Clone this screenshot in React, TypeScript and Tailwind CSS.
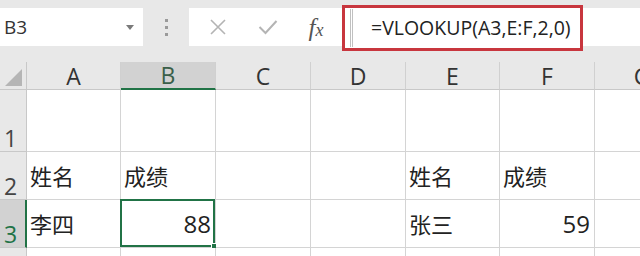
import React from "react";

const FONT = { fontFamily: '"Open Sans","Noto Sans CJK SC",sans-serif' };

type Col = { k: string; w: string };
const cols: Col[] = [
  { k: "A", w: "w-[94px]" },
  { k: "B", w: "w-[95px]" },
  { k: "C", w: "w-[95px]" },
  { k: "D", w: "w-[95px]" },
  { k: "E", w: "w-[94px]" },
  { k: "F", w: "w-[95px]" },
  { k: "G", w: "w-[95px]" },
];

function CJK({ children }: { children: React.ReactNode }) {
  return (
    <span className="text-[22px] text-[#222]" style={{ fontFamily: '"Noto Sans CJK SC",sans-serif' }}>
      {children}
    </span>
  );
}

function Num({ children }: { children: React.ReactNode }) {
  return <span className="text-[24px] text-[#222]">{children}</span>;
}

type CellDef = { text?: React.ReactNode; right?: boolean };

function Row({
  n,
  h,
  cells,
  selected,
}: {
  n: string;
  h: string;
  cells: Record<string, CellDef>;
  selected?: boolean;
}) {
  return (
    <div className={`flex ${h}`}>
      <div
        className={`w-[27px] shrink-0 flex items-end pl-[4px] pb-[1px] border-b border-[#c8c8c8] ${
          selected ? "bg-[#d2d2d2] border-r-2 border-r-[#217346] text-[#217346]" : "bg-[#e8e8e8] border-r border-r-[#c8c8c8] text-[#444]"
        }`}
      >
        <span className="text-[23px] leading-none">{n}</span>
      </div>
      {cols.map((c) => {
        const d = cells[c.k];
        const sel = selected && c.k === "B";
        return (
          <div
            key={c.k}
            className={`${c.w} shrink-0 relative bg-white border-r border-b border-[#d4d4d4] flex items-center ${
              d?.right ? "justify-end pr-[4px]" : "pl-[3px]"
            }`}
          >
            {d?.text}
            {sel && (
              <div className="absolute -left-[1px] -top-[1px] right-0 bottom-0 border-2 border-[#217346]">
                <div className="absolute -right-[4px] -bottom-[4px] w-[6px] h-[6px] bg-[#217346] border border-white" />
              </div>
            )}
          </div>
        );
      })}
    </div>
  );
}

export default function App() {
  return (
    <div className="relative w-[640px] h-[256px] overflow-hidden bg-[#e8e8e8] text-[#222]" style={FONT}>
      {/* Toolbar */}
      <div className="h-[62px] flex items-start pt-[5px]">
        <div className="w-[143px] h-[38px] mt-[3px] bg-white flex items-center justify-between pl-[4px] pr-[9px] shrink-0">
          <span className="text-[19px] text-[#333]">B3</span>
          <svg width="8" height="5" viewBox="0 0 8 5">
            <path d="M0 0 L8 0 L4 5 Z" fill="#7a7a7a" />
          </svg>
        </div>
        <div className="w-[46px] h-[38px] mt-[3px] flex flex-col items-center justify-center gap-[4px] shrink-0">
          <div className="w-[3px] h-[3px] bg-[#9a9a9a]" />
          <div className="w-[3px] h-[3px] bg-[#9a9a9a]" />
          <div className="w-[3px] h-[3px] bg-[#9a9a9a]" />
        </div>
        <div className="flex-1 h-[38px] mt-[3px] bg-white flex items-center">
          <div className="w-[56px] flex justify-center pl-[1px]">
            <svg width="18" height="18" viewBox="0 0 18 18">
              <path d="M2 2 L16 16 M16 2 L2 16" stroke="#b4b4b4" strokeWidth="1.6" fill="none" />
            </svg>
          </div>
          <div className="w-[46px] flex justify-center">
            <svg width="20" height="16" viewBox="0 0 20 16">
              <path d="M1.5 8 L7.5 14 L18.5 2" stroke="#b4b4b4" strokeWidth="2" fill="none" />
            </svg>
          </div>
          <div className="w-[50px] flex justify-center">
            <span
              className="italic text-[25px] text-[#555] leading-none"
              style={{ fontFamily: '"Liberation Serif",serif' }}
            >
              f<span className="text-[18px]">x</span>
            </span>
          </div>
        </div>
      </div>
      {/* Red highlight around the formula input */}
      <div className="absolute left-[342px] top-[5px] w-[241px] h-[46px] border-[3px] border-[#c8363e] bg-white flex items-center">
        <div className="ml-[5px] w-[3px] self-stretch my-[1px] border-l border-r border-[#c0c0c0]" />
        <span className="ml-[18px] text-[19.5px] text-[#222]">=VLOOKUP(A3,E:F,2,0)</span>
      </div>

      {/* Column header */}
      <div className="flex h-[28px]">
        <div className="w-[27px] shrink-0 bg-[#e8e8e8] border-r border-b border-[#c8c8c8] flex items-end justify-end pr-[4px] pb-[3px]">
          <svg width="17" height="17" viewBox="0 0 17 17">
            <path d="M17 0 L17 17 L0 17 Z" fill="#b5b5b5" />
          </svg>
        </div>
        {cols.map((c) => {
          const sel = c.k === "B";
          return (
            <div
              key={c.k}
              className={`${c.w} shrink-0 flex items-end justify-center border-r border-[#d0d0d0] ${
                sel ? "bg-[#d2d2d2] border-b-2 border-b-[#217346] text-[#3a5f49]" : "bg-[#e8e8e8] border-b border-b-[#c8c8c8] text-[#333]"
              }`}
            >
              <span className="text-[23px] leading-[26px]">{c.k}</span>
            </div>
          );
        })}
      </div>
      <Row n="1" h="h-[62px]" cells={{}} />
      <Row
        n="2"
        h="h-[48px]"
        cells={{
          A: { text: <CJK>姓名</CJK> },
          B: { text: <CJK>成绩</CJK> },
          E: { text: <CJK>姓名</CJK> },
          F: { text: <CJK>成绩</CJK> },
        }}
      />
      <Row
        n="3"
        h="h-[48px]"
        selected
        cells={{
          A: { text: <CJK>李四</CJK> },
          B: { text: <Num>88</Num>, right: true },
          E: { text: <CJK>张三</CJK> },
          F: { text: <Num>59</Num>, right: true },
        }}
      />
      <Row n="" h="h-[48px]" cells={{}} />
    </div>
  );
}
